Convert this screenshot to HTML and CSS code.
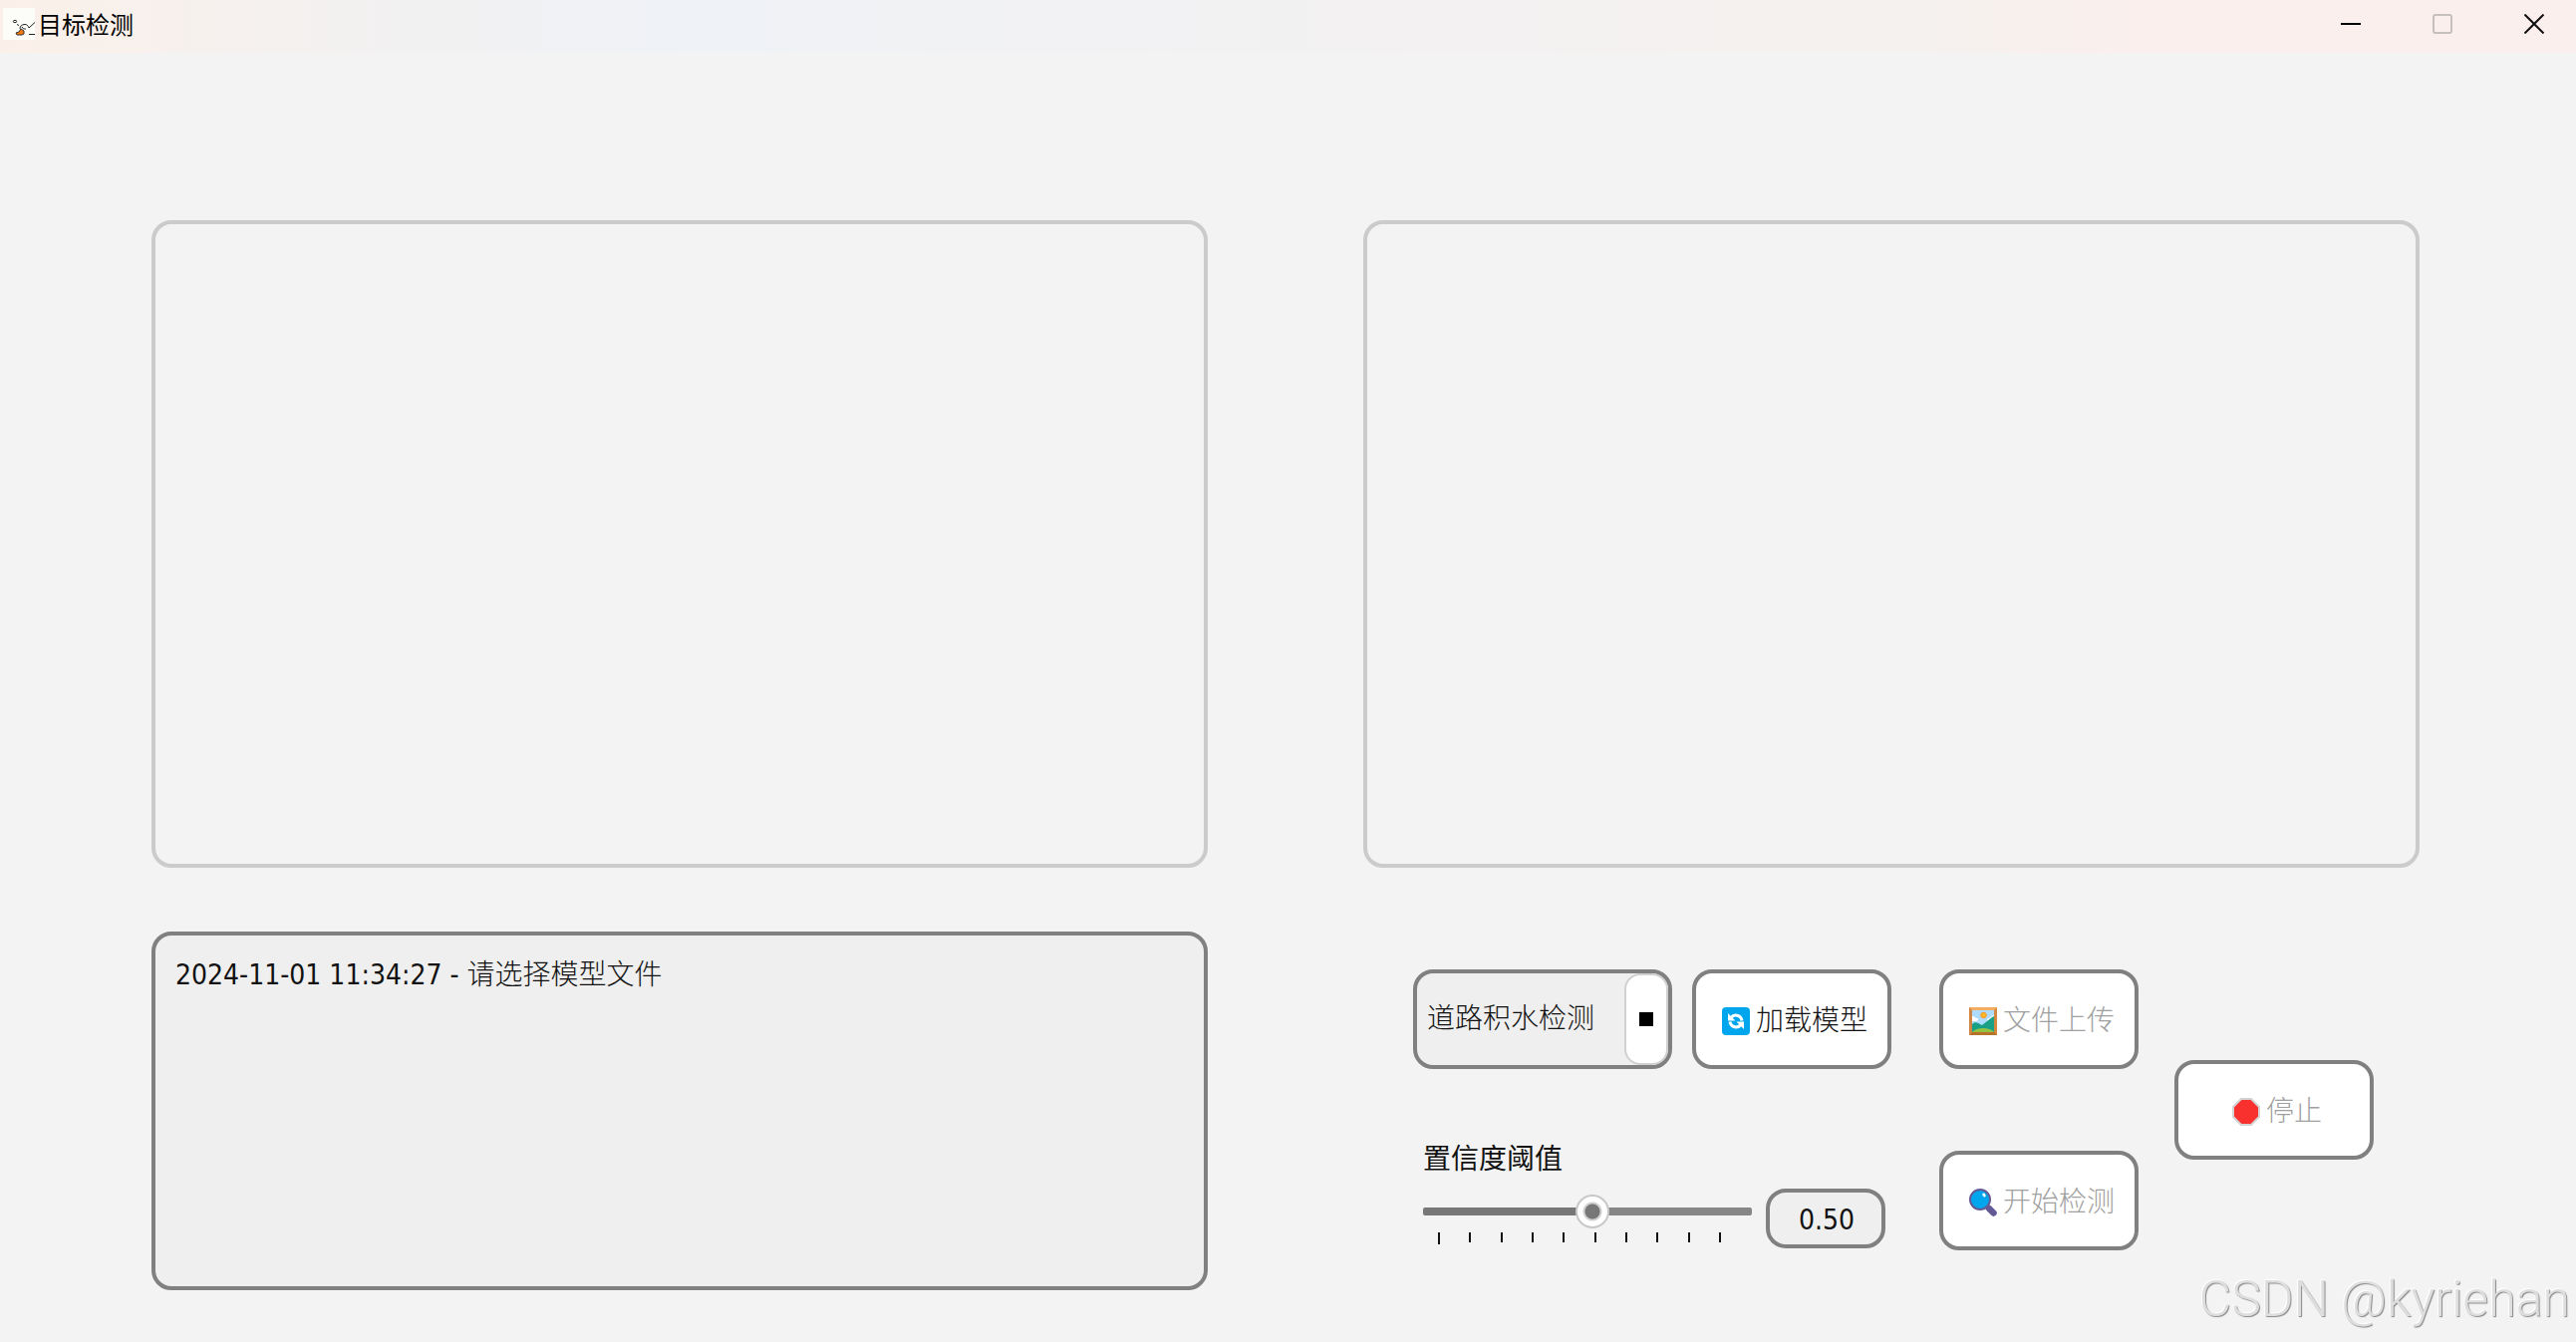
FILE: index.html
```html
<!DOCTYPE html>
<html lang="zh-CN">
<head>
<meta charset="utf-8">
<title>目标检测</title>
<link rel="stylesheet" href="styles.css">
</head>
<body>
<header class="titlebar">
  <svg class="app-icon" viewBox="0 0 32 32" aria-hidden="true">
    <rect width="32" height="32" fill="#fcfcf8"/>
    <g fill="none" stroke="#222" stroke-width="1">
      <ellipse cx="12" cy="13.500" rx="1.700" ry="1.200"/>
      <path d="M14 16.500l2 1M17 21c0-3 2-4.500 5-4.500 2 0 3 1 4 3.500l6-5.500M26 26.500h6M19 19c1 2 2 2 4 2"/>
    </g>
    <path d="M13 25l3-1 2-3 3 2v3l-2 1h-5z" fill="#f47a10" stroke="#333" stroke-width="1"/>
  </svg>
  <h1 class="title">目标检测</h1>
  <div class="window-buttons">
    <button type="button" class="window-button" aria-label="最小化"><svg viewBox="0 0 20 20"><path d="M0 10h20" stroke="#000" stroke-width="2"/></svg></button>
    <button type="button" class="window-button" aria-label="最大化" disabled><svg viewBox="0 0 20 20"><rect x="1" y="1" width="18" height="18" rx="2" fill="none" stroke="#c5bfbd" stroke-width="2"/></svg></button>
    <button type="button" class="window-button" aria-label="关闭"><svg viewBox="0 0 20 20"><path d="M0.500 0.500l19 19M19.500 0.500l-19 19" stroke="#111" stroke-width="2"/></svg></button>
  </div>
</header>
<main class="workspace">
  <section class="view" aria-label="原图"></section>
  <section class="view" aria-label="检测结果"></section>
  <textarea class="log" readonly aria-label="日志">2024-11-01 11:34:27 - 请选择模型文件</textarea>
  <section class="controls">
    <div class="model">
      <div class="model-row">
        <div class="combo">
          <select class="combo-select" aria-label="模型">
            <option>道路积水检测</option>
          </select>
          <span class="combo-drop"></span>
        </div>
        <button type="button" class="action">
          <svg class="icon" viewBox="0 0 28 28" aria-hidden="true">
            <rect width="28" height="28" rx="4" fill="#00a6ed"/>
            <g fill="none" stroke="#fff" stroke-width="3">
              <path d="M9 10.500c3-4 10-3 11 3"/>
              <path d="M19 17.500c-3 4-10 3-11-3"/>
            </g>
            <path d="M6 6v7.500h7.500zM22 22v-7.500h-7.500z" fill="#fff"/>
          </svg>加载模型</button>
      </div>
      <label class="threshold-label" for="threshold">置信度阈值</label>
      <div class="threshold-row">
        <div class="slider">
          <input class="slider-input" id="threshold" type="range" min="0" max="0.97" step="0.01" value="0.5">
          <div class="ticks"><i></i><i></i><i></i><i></i><i></i><i></i><i></i><i></i><i></i><i></i></div>
        </div>
        <input class="value" type="text" value="0.50" aria-label="阈值">
      </div>
    </div>
    <div class="run">
      <button type="button" class="action" disabled>
        <svg class="icon" viewBox="0 0 28 28" aria-hidden="true">
          <rect width="28" height="28" fill="#f3ad61"/>
          <path d="M28 0v28H0l3-3h22V3z" fill="#d3883e"/>
          <path d="M0 28l3-3h22l3 3z" fill="#b97028"/>
          <path d="M0 0l3 3v22l-3 3z" fill="#cf8544"/>
          <rect x="3" y="3" width="22" height="22" fill="#aedcff"/>
          <circle cx="14.500" cy="8" r="2.800" fill="#f9b52b" stroke="#f59a23" stroke-width="1"/>
          <path d="M3 9c3 0 3 2 5 2s1 3-1 3H3zM25 8c-3 0-3 3-5 3s-3 3 0 3h5z" fill="#fff"/>
          <path d="M3 17c3-3 5-2 10 1l5-4c3-2 4-4 7-5v16H3z" fill="#17a086"/>
          <path d="M3 25c3-3 6-4 11-4s8 1 11 4z" fill="#93c244"/>
        </svg>文件上传</button>
      <button type="button" class="action" disabled>
        <svg class="icon" viewBox="0 0 28 28" aria-hidden="true">
          <path d="M16 16l3 3" stroke="#635994" stroke-width="3"/>
          <path d="M20 20l4.500 4.500" stroke="#635994" stroke-width="6.500" stroke-linecap="round"/>
          <circle cx="11" cy="11" r="10" fill="#00a6ed" stroke="#635994" stroke-width="2"/>
          <ellipse cx="15" cy="6.500" rx="1.500" ry="2" transform="rotate(-35 15 6.500)" fill="#fff"/>
        </svg>开始检测</button>
    </div>
    <button type="button" class="action" disabled>
      <svg class="icon" viewBox="0 0 28 28" aria-hidden="true">
        <path d="M9 1h10l8 8v10l-8 8H9l-8-8V9z" fill="#f8312f" stroke="#d3d3d3" stroke-width="2"/>
      </svg>停止</button>
  </section>
</main>
<div class="watermark">CSDN @kyriehan</div>
</body>
</html>
```
FILE: styles.css
```css
* {
  box-sizing: border-box;
}

body {
  margin: 0;
  min-height: 100vh;
  display: flex;
  flex-direction: column;
  background: #f3f3f3;
  color: #111;
  font: 28px/40px "DejaVu Sans Condensed", "Noto Sans CJK SC Light", "Noto Sans CJK SC", sans-serif;
}

button,
input,
select,
textarea {
  font: inherit;
  color: inherit;
  margin: 0;
}

.titlebar {
  display: flex;
  align-items: center;
  height: 53px;
  padding: 0 0 6px 3px;
  background: linear-gradient(90deg, #fbf0e9 0, #f3f1f0 13%, #eff2f7 27%, #f1f2f4 35%, #f3f1f2 55%, #f5f1ee 75%, #faefed 83%);
}

.app-icon {
  width: 32px;
  height: 32px;
}

.title {
  margin: 0 auto 0 3px;
  color: #000;
  font: 24px/32px "Noto Sans CJK SC", sans-serif;
}

.window-buttons {
  display: flex;
  gap: 8px;
}

.window-button {
  width: 84px;
  height: 46px;
  padding: 0;
  border: 0;
  background: none;
}

.window-buttons svg {
  display: block;
  width: 20px;
  height: 20px;
  margin: 0 auto;
}

.workspace {
  flex: 1;
  display: grid;
  grid-template-columns: 1fr 1fr;
  grid-template-rows: 65fr 36fr;
  gap: 64px 156px;
  padding: 168px 157px 52px 152px;
}

.view {
  border: 4px solid #cbcbcb;
  border-radius: 20px;
}

.log {
  display: block;
  width: 100%;
  padding: 20px;
  border: 4px solid #808080;
  border-radius: 20px;
  background: #efefef;
  resize: none;
  outline: 0;
}

.controls {
  display: flex;
  align-items: center;
  align-self: start;
  padding: 38px 46px 0 50px;
}

.model {
  align-self: flex-start;
  width: 480px;
}

.model-row {
  display: flex;
  gap: 20px;
}

.combo {
  position: relative;
  flex: 1;
}

.combo-select {
  appearance: none;
  width: 100%;
  height: 100px;
  padding: 0 52px 0 10px;
  border: 4px solid #808080;
  border-radius: 20px;
  background: #efefef;
}

.combo-drop {
  position: absolute;
  top: 4px;
  right: 4px;
  bottom: 4px;
  width: 44px;
  display: grid;
  place-items: center;
  border: 2px solid #d0d0d0;
  border-radius: 16px;
  background: #fff;
  pointer-events: none;
}

.combo-drop::before {
  content: "";
  width: 14px;
  height: 14px;
  background: #000;
}

.action {
  display: flex;
  align-items: center;
  justify-content: center;
  gap: 6px;
  width: 200px;
  height: 100px;
  padding: 4px 0 0 6px;
  border: 4px solid #808080;
  border-radius: 20px;
  background: #fff;
}

.action:disabled {
  color: #a0a0a0;
}

.icon {
  width: 28px;
  height: 28px;
}

.threshold-label {
  display: block;
  margin: 68px 0 12px 10px;
  font-family: "Noto Sans CJK SC", sans-serif;
}

.threshold-row {
  display: flex;
  gap: 14px;
  padding-left: 10px;
}

.slider {
  width: 330px;
  padding-top: 6px;
}

.slider-input {
  appearance: none;
  display: block;
  width: 100%;
  height: 34px;
  background: none;
}

.slider-input::-webkit-slider-runnable-track {
  height: 8px;
  border-radius: 2px;
  background: linear-gradient(90deg, #777 52%, #868686 52%);
}

.slider-input::-webkit-slider-thumb {
  appearance: none;
  width: 34px;
  height: 34px;
  margin-top: -13px;
  border: 2px solid #c8c8c8;
  border-radius: 50%;
  background: radial-gradient(circle, #777 7px, #d0d0d0 8px, #d0d0d0 9px, #fff 10px);
}

.ticks {
  display: flex;
  justify-content: space-between;
  margin: 4px 31px 0 15px;
}

.ticks i {
  width: 2px;
  height: 10px;
  background: #111;
}

.ticks i:first-child {
  height: 12px;
}

.value {
  width: 120px;
  height: 60px;
  padding: 2px 0 0 2px;
  border: 4px solid #808080;
  border-radius: 20px;
  background: #efefef;
  text-align: center;
}

.run {
  display: flex;
  flex-direction: column;
  gap: 82px;
  margin: 0 36px 0 48px;
}

.watermark {
  position: absolute;
  right: 6px;
  bottom: 11px;
  color: #dedede;
  font: 300 50px/64px Roboto, sans-serif;
  text-shadow: 1px 1px 1px #888, -1px -1px 1px #fff;
  pointer-events: none;
}
```
